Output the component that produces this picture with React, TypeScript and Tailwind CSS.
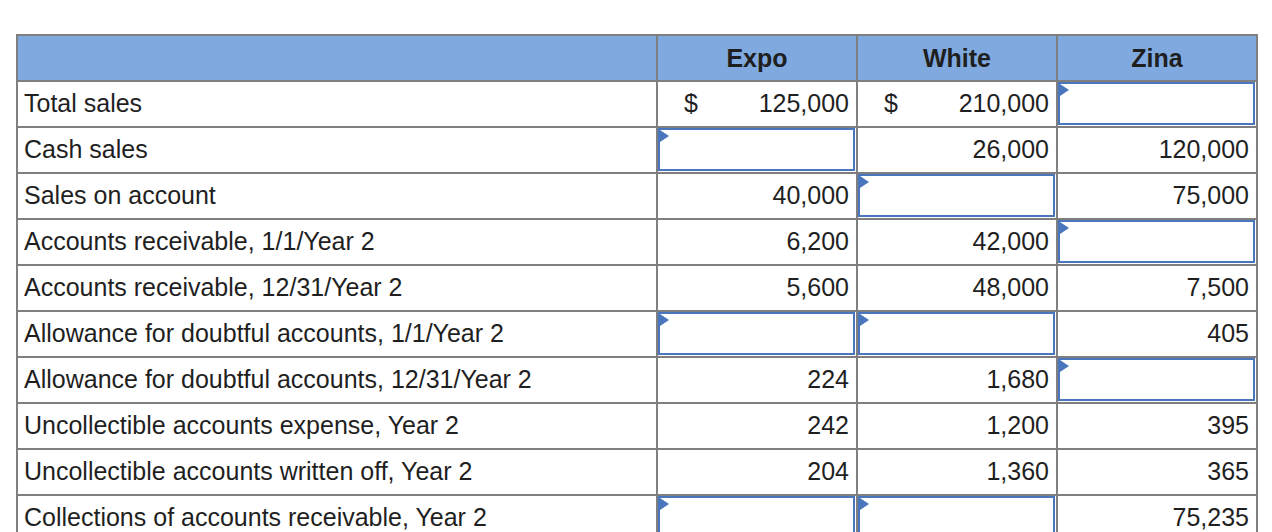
import React from "react";

type Cell = { v?: string; dollar?: boolean; input?: boolean };

const rows: { label: string; cells: Cell[] }[] = [
  { label: "Total sales", cells: [{ v: "125,000", dollar: true }, { v: "210,000", dollar: true }, { input: true }] },
  { label: "Cash sales", cells: [{ input: true }, { v: "26,000" }, { v: "120,000" }] },
  { label: "Sales on account", cells: [{ v: "40,000" }, { input: true }, { v: "75,000" }] },
  { label: "Accounts receivable, 1/1/Year 2", cells: [{ v: "6,200" }, { v: "42,000" }, { input: true }] },
  { label: "Accounts receivable, 12/31/Year 2", cells: [{ v: "5,600" }, { v: "48,000" }, { v: "7,500" }] },
  { label: "Allowance for doubtful accounts, 1/1/Year 2", cells: [{ input: true }, { input: true }, { v: "405" }] },
  { label: "Allowance for doubtful accounts, 12/31/Year 2", cells: [{ v: "224" }, { v: "1,680" }, { input: true }] },
  { label: "Uncollectible accounts expense, Year 2", cells: [{ v: "242" }, { v: "1,200" }, { v: "395" }] },
  { label: "Uncollectible accounts written off, Year 2", cells: [{ v: "204" }, { v: "1,360" }, { v: "365" }] },
  { label: "Collections of accounts receivable, Year 2", cells: [{ input: true }, { input: true }, { v: "75,235" }] },
];

function ValueCell({ c }: { c: Cell }) {
  return (
    <div className="relative h-[44px] w-[198px] shrink-0 border-r-2 border-b-2 border-[#7f7f7f] box-content">
      {c.input ? (
        <div className="absolute top-0 left-0 right-[1px] bottom-[1px] border-2 border-[#4a76bd] bg-white">
          <div className="absolute top-0 left-0 w-0 h-0 border-t-[6px] border-b-[6px] border-l-[9px] border-t-transparent border-b-transparent border-l-[#4a76bd]" />
        </div>
      ) : (
        <div className="flex h-full items-center justify-between pl-[26px] pr-[7px]">
          <span>{c.dollar ? "$" : ""}</span>
          <span>{c.v}</span>
        </div>
      )}
    </div>
  );
}

export default function App() {
  return (
    <div
      className="min-h-[532px] bg-white pt-[34px] pl-[16px] text-[25px] text-[#1f1f1f]"
      style={{ fontFamily: '"Liberation Sans", Arial, sans-serif' }}
    >
      <div className="inline-flex flex-col border-l-2 border-t-2 border-[#7f7f7f]">
        <div className="flex bg-[#80aadf] font-bold">
          <div className="h-[44px] w-[638px] shrink-0 border-r-2 border-b-2 border-[#7f7f7f] box-content" />
          {["Expo", "White", "Zina"].map((h) => (
            <div
              key={h}
              className="flex h-[44px] w-[198px] shrink-0 items-center justify-center pt-[1px] border-r-2 border-b-2 border-[#7f7f7f] box-border"
              style={{ height: 46, width: 200 }}
            >
              {h}
            </div>
          ))}
        </div>
        {rows.map((r) => (
          <div key={r.label} className="flex">
            <div className="flex h-[44px] w-[632px] shrink-0 items-center pl-[6px] border-r-2 border-b-2 border-[#7f7f7f] box-content">
              {r.label}
            </div>
            {r.cells.map((c, i) => (
              <ValueCell key={i} c={c} />
            ))}
          </div>
        ))}
      </div>
    </div>
  );
}
